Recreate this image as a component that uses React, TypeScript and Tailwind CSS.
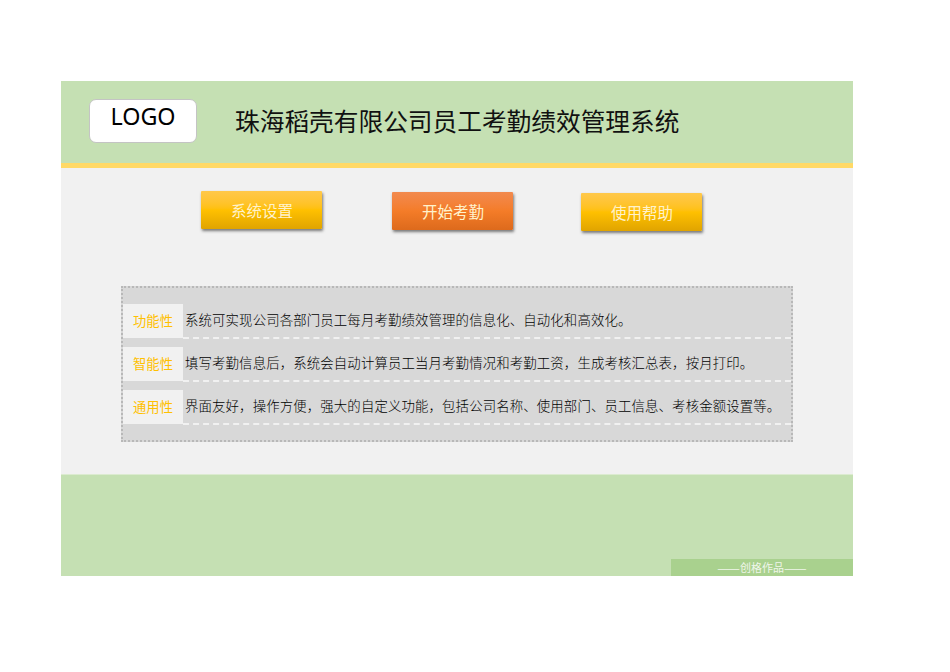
const rows = [
  ["功能性", "系统可实现公司各部门员工每月考勤绩效管理的信息化、自动化和高效化。"],
  ["智能性", "填写考勤信息后，系统会自动计算员工当月考勤情况和考勤工资，生成考核汇总表，按月打印。"],
  ["通用性", "界面友好，操作方便，强大的自定义功能，包括公司名称、使用部门、员工信息、考核金额设置等。"],
];

function Btn({ label, cls }: { label: string; cls: string }) {
  return (
    <div className={"flex h-[38px] w-[121px] items-center justify-center rounded-[1px] pl-[1px] pt-[1px] text-[15.5px] text-[#fff2cc] shadow-[1px_2px_3px_rgba(0,0,0,0.5)] " + cls}>
      {label}
    </div>
  );
}

export default function App() {
  return (
    <div className="min-h-[672px] bg-white pl-[61px] pt-[81px] font-['Noto_Sans_CJK_SC','Noto_Sans',sans-serif]">
      <div className="w-[792px]">
        <header className="flex h-[82px] items-center bg-[#c5e0b3] pl-[28px]">
          <div className="mb-[2px] flex h-[44px] w-[108px] items-start justify-center rounded-[7px] border border-[#c4c4c4] bg-white font-['Noto_Sans',sans-serif] text-[23.3px] leading-[33px] text-black">
            LOGO
          </div>
          <h1 className="mb-[3px] ml-[38px] text-[24.7px] font-normal leading-none text-[#111]">
            珠海稻壳有限公司员工考勤绩效管理系统
          </h1>
        </header>
        <div className="h-[5px] bg-[#ffd966]" />
        <main className="h-[306px] bg-[#f1f1f1] pl-[60px]">
          <div className="flex items-start pl-[80px] pt-[23px]">
            <Btn label="系统设置" cls="bg-gradient-to-b from-[#ffc84a] via-[#ffc000] to-[#e0a400]" />
            <div className="ml-[70px] mt-[1px]">
              <Btn label="开始考勤" cls="bg-gradient-to-b from-[#f28a4e] via-[#f47c28] to-[#dd6a1c]" />
            </div>
            <div className="ml-[68px] mt-[2px]">
              <Btn label="使用帮助" cls="bg-gradient-to-b from-[#ffc84a] via-[#ffc000] to-[#e0a400]" />
            </div>
          </div>
          <section className="mt-[55px] h-[156px] w-[672px] border-2 border-dotted border-[#b8b8b8] bg-[#d8d8d8] pt-[16px]">
            {rows.map(([k, v]) => (
              <div key={k} className="mb-[8px] flex h-[35px]">
                <div className="flex h-[34px] w-[60px] items-center justify-center bg-[#f1f1f1] text-[13.3px] text-[#ffc000]">{k}</div>
                <div className="flex flex-1 items-center border-b-2 border-dashed border-[#f1f1f1] pb-[3px] pl-[2px] text-[13.4px] font-light tracking-[0.14px] text-black">{v}</div>
              </div>
            ))}
          </section>
        </main>
        <footer className="flex h-[102px] items-end justify-end border-t border-[#dcebd0] bg-[#c5e0b3]">
          <div className="flex h-[17px] w-[182px] items-center justify-center bg-[#a9d18e] text-[11px] leading-none text-[#f0f6ea]">
            <span className="text-[13.5px]">——</span>创格作品<span className="text-[13.5px]">——</span>
          </div>
        </footer>
      </div>
    </div>
  );
}
